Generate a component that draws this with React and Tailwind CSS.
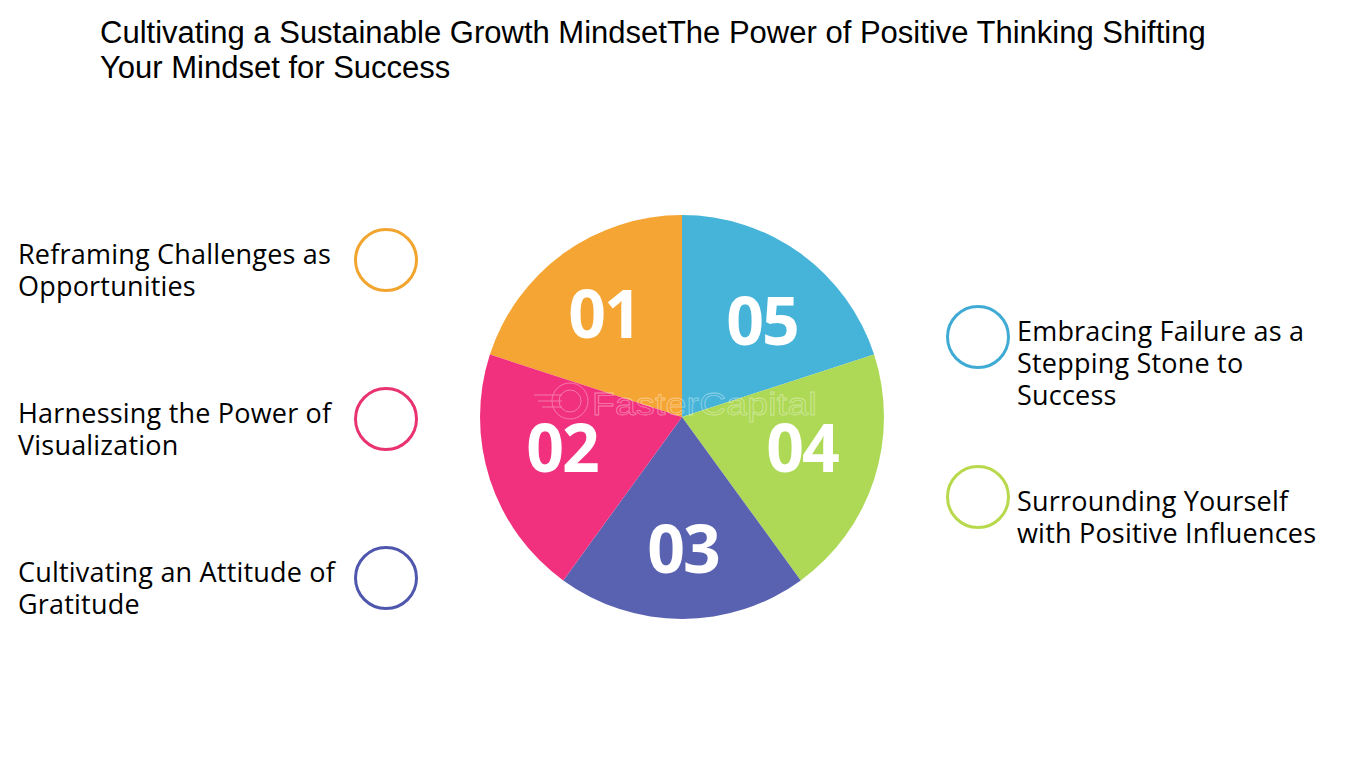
import React from "react";

const R = 202;
const C = 202;

function pt(deg) {
  const a = (deg * Math.PI) / 180;
  return [C + R * Math.sin(a), C - R * Math.cos(a)];
}

function slice(from, to) {
  const [x1, y1] = pt(from);
  const [x2, y2] = pt(to);
  return `M${C} ${C} L${x1.toFixed(2)} ${y1.toFixed(2)} A${R} ${R} 0 0 1 ${x2.toFixed(2)} ${y2.toFixed(2)} Z`;
}

const slices = [
  { from: -72, to: 0, color: "#f5a533" },
  { from: 0, to: 72, color: "#46b4d8" },
  { from: 72, to: 144, color: "#aed956" },
  { from: 144, to: 216, color: "#5961b1" },
  { from: 216, to: 288, color: "#f1317e" },
];

const numbers = [
  { label: "01", x: 124, y: 123 },
  { label: "05", x: 282, y: 130 },
  { label: "02", x: 82, y: 257 },
  { label: "04", x: 322, y: 257 },
  { label: "03", x: 203, y: 358 },
];

const leftItems = [
  { lines: ["Reframing Challenges as", "Opportunities"], ring: "border-[#f1a52f]" },
  { lines: ["Harnessing the Power of", "Visualization"], ring: "border-[#e8336f]" },
  { lines: ["Cultivating an Attitude of", "Gratitude"], ring: "border-[#4f56ad]" },
];

function Ring({ className }) {
  return <div className={`w-[64px] h-[64px] shrink-0 rounded-full border-[3px] ${className}`} />;
}

function Pie() {
  return (
    <svg width="404" height="404" viewBox="0 0 404 404" className="shrink-0">
      {slices.map((s) => (
        <path key={s.color} d={slice(s.from, s.to)} fill={s.color} />
      ))}
      {/* faint watermark */}
      <g opacity="0.35" fill="none" stroke="#ffffff" strokeWidth="1">
        <circle cx="90" cy="186" r="18" />
        <circle cx="90" cy="186" r="11" />
        <path d="M54 180 H82 M58 186 H82 M62 192 H82" />
      </g>
      <text
        x="112"
        y="200"
        fill="none"
        stroke="#ffffff"
        strokeOpacity="0.4"
        strokeWidth="0.8"
        fontFamily="'Liberation Sans', Arial, sans-serif"
        fontSize="32"
        textLength="225"
        lengthAdjust="spacingAndGlyphs"
      >
        FasterCapital
      </text>
      {numbers.map((n) => (
        <text
          key={n.label}
          x={n.x}
          y={n.y}
          textAnchor="middle"
          fill="#ffffff"
          fontFamily="'Open Sans', sans-serif"
          fontWeight="700"
          fontSize="66"
          letterSpacing="-2"
        >
          {n.label}
        </text>
      ))}
    </svg>
  );
}

export default function App() {
  return (
    <div className="w-[1350px] h-[759px] bg-white overflow-hidden text-black">
      <h1 className="ml-[100px] pt-[15px] w-[1140px] font-['Liberation_Sans',Arial,sans-serif] text-[31px] leading-[35px] font-normal">
        Cultivating a Sustainable Growth MindsetThe Power of Positive Thinking Shifting Your Mindset for Success
      </h1>

      <div className="flex items-start mt-[130px] font-['Open_Sans',sans-serif] text-[27px] tracking-[0.2px] leading-[32px]">
        <div className="ml-[18px] w-[400px] pt-[13px] flex flex-col gap-[85px]">
          {leftItems.map((item) => (
            <div key={item.lines[0]} className="flex items-start justify-between">
              <p className="mt-[10px] whitespace-nowrap">
                {item.lines[0]}
                <br />
                {item.lines[1]}
              </p>
              <Ring className={item.ring} />
            </div>
          ))}
        </div>

        <div className="ml-[62px]">
          <Pie />
        </div>

        <div className="ml-[62px] pt-[90px] flex flex-col">
          <div className="flex items-start gap-[7px]">
            <Ring className="border-[#3fabd4]" />
            <p className="mt-[10px] whitespace-nowrap">
              Embracing Failure as a
              <br />
              Stepping Stone to
              <br />
              Success
            </p>
          </div>
          <div className="flex items-start gap-[7px] mt-[54px]">
            <Ring className="border-[#b8d94b]" />
            <p className="mt-[20px] whitespace-nowrap">
              Surrounding Yourself
              <br />
              with Positive Influences
            </p>
          </div>
        </div>
      </div>
    </div>
  );
}
